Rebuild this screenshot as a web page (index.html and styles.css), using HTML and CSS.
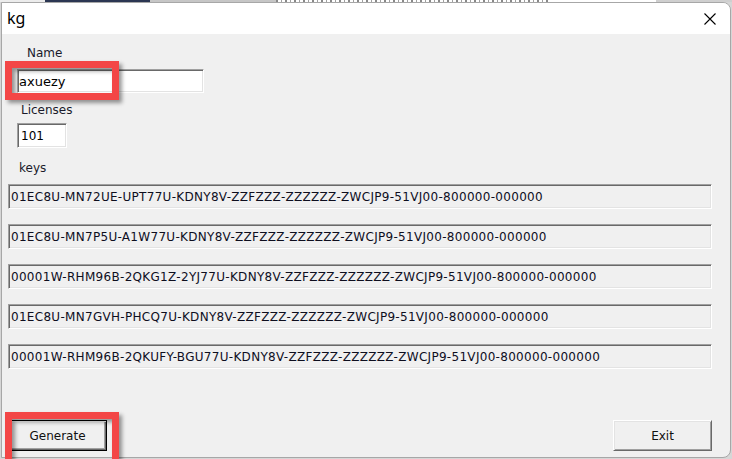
FILE: index.html
```html
<!DOCTYPE html>
<html lang="en">
<head>
    <meta charset="UTF-8">
    <meta name="viewport" content="width=device-width, initial-scale=1.0">
    <title>kg</title>
    <link rel="stylesheet" href="styles.css">
</head>
<body>
    <div class="desktop">
        <span class="desk-light"></span>
        <span class="desk-dark"></span>
        <span class="desk-gray"></span>
        <span class="desk-ink"></span>
        <span class="desk-fill"></span>
        <span class="desk-gray2"></span>
    </div>

    <div class="window">
        <div class="titlebar">
            <span class="title">kg</span>
            <svg class="close" width="12" height="12" viewBox="0 0 12 12">
                <path d="M0.5 0.5 L11.5 11.5 M11.5 0.5 L0.5 11.5" stroke="#000" stroke-width="1.1" fill="none"/>
            </svg>
        </div>

        <div class="client">
            <div class="label label-name">Name</div>
            <input class="edit edit-name" type="text" value="axuezy">

            <div class="label label-lic">Licenses</div>
            <input class="edit edit-lic" type="text" value="101">

            <div class="label label-keys">keys</div>
            <div class="keys">
                <div class="key">01EC8U-MN72UE-UPT77U-KDNY8V-ZZFZZZ-ZZZZZZ-ZWCJP9-51VJ00-800000-000000</div>
                <div class="key">01EC8U-MN7P5U-A1W77U-KDNY8V-ZZFZZZ-ZZZZZZ-ZWCJP9-51VJ00-800000-000000</div>
                <div class="key">00001W-RHM96B-2QKG1Z-2YJ77U-KDNY8V-ZZFZZZ-ZZZZZZ-ZWCJP9-51VJ00-800000-000000</div>
                <div class="key">01EC8U-MN7GVH-PHCQ7U-KDNY8V-ZZFZZZ-ZZZZZZ-ZWCJP9-51VJ00-800000-000000</div>
                <div class="key">00001W-RHM96B-2QKUFY-BGU77U-KDNY8V-ZZFZZZ-ZZZZZZ-ZWCJP9-51VJ00-800000-000000</div>
            </div>

            <div class="buttons">
                <button class="btn btn-default">Generate</button>
                <button class="btn">Exit</button>
            </div>
        </div>
    </div>

    <div class="mark mark-name"></div>
    <div class="mark mark-generate"></div>
</body>
</html>
```

FILE: styles.css
```css
body {
    margin: 0;
    width: 732px;
    height: 459px;
    overflow: hidden;
    position: relative;
    background-color: #d6d6d6;
    font-family: "DejaVu Sans", Tahoma, sans-serif;
    font-size: 12px;
    color: #111;
}

/* bits of the desktop peeking above the dialog */
.desktop {
    display: flex;
    height: 2px;
    overflow: hidden;
    background-color: #fff;
}

.desk-light {
    width: 45px;
    background-color: #ececec;
}

.desk-dark {
    width: 105px;
    background-color: #2b3652;
}

.desk-gray {
    width: 126px;
    background-color: #c6c6c6;
}

.desk-ink {
    width: 274px;
    background: repeating-linear-gradient(90deg, #555 0 2px, #fff 2px 5px, #777 5px 6px, #fff 6px 9px);
    opacity: 0.7;
}

.desk-fill {
    flex: 1;
}

.desk-gray2 {
    width: 76px;
    background-color: #cfcfcf;
}

.window {
    width: 728px;
    height: 454px;
    margin-left: 1px;
    border: 1px solid #a7a7a7;
    border-radius: 0 8px 8px 0;
    background-color: #f0f0f0;
    overflow: hidden;
}

.titlebar {
    display: flex;
    align-items: center;
    justify-content: space-between;
    height: 31px;
    padding: 0 14px 0 5px;
    background-color: #fff;
}

.title {
    font-family: "Noto Sans", "Open Sans", sans-serif;
    font-size: 16px;
    line-height: 31px;
    color: #000;
}

.close {
    display: block;
}

.client {
    height: 423px;
}

.label {
    line-height: 14px;
    color: #1a1a2a;
}

.label-name {
    margin: 12px 0 0 25px;
}

.label-lic {
    margin: 10px 0 0 19px;
}

.label-keys {
    margin: 13px 0 0 17px;
}

.edit {
    display: block;
    box-sizing: border-box;
    margin: 0 0 0 15px;
    padding: 0 0 0 1px;
    font-family: "DejaVu Sans", Tahoma, sans-serif;
    color: #000;
    background-color: #fff;
    border-style: solid;
    border-width: 1px;
    border-color: #a0a0a0 #fff #fff #a0a0a0;
    box-shadow: inset 1px 1px 0 #696969, inset -1px -1px 0 #e3e3e3;
    outline: none;
}

.edit-name {
    width: 187px;
    height: 24px;
    margin-top: 9px;
    font-size: 13px;
}

.edit-lic {
    width: 50px;
    height: 25px;
    margin-top: 6px;
    padding-left: 3px;
    font-size: 12px;
}

.keys {
    display: flex;
    flex-direction: column;
    gap: 15px;
    margin: 9px 0 0 6px;
    width: 704px;
}

.key {
    box-sizing: border-box;
    height: 25px;
    line-height: 25px;
    padding-left: 2px;
    white-space: nowrap;
    letter-spacing: 0.3px;
    color: #0e0e1e;
    border-style: solid;
    border-width: 1px;
    border-color: #a0a0a0 #fff #fff #a0a0a0;
    box-shadow: inset 1px 1px 0 #696969, inset -1px -1px 0 #e3e3e3;
}

.buttons {
    display: flex;
    justify-content: space-between;
    margin: 51px 0 0 6px;
    width: 704px;
}

.btn {
    box-sizing: border-box;
    width: 99px;
    height: 31px;
    padding: 0;
    font-family: "DejaVu Sans", Tahoma, sans-serif;
    font-size: 12px;
    color: #111;
    background-color: #f0f0f0;
    border-style: solid;
    border-width: 1px;
    border-color: #fff #696969 #696969 #fff;
    box-shadow: inset 1px 1px 0 #e3e3e3, inset -1px -1px 0 #a0a0a0;
}

.btn-default {
    border-color: #000;
    box-shadow: inset 1px 1px 0 #fff, inset -1px -1px 0 #696969, inset -2px -2px 0 #a0a0a0;
}

/* red highlight rectangles drawn over the screenshot */
.mark {
    position: absolute;
    left: 5px;
    width: 100px;
    border: 7px solid #f34646;
    box-shadow: 3px 3px 4px rgba(0, 0, 0, 0.4), inset 3px 3px 4px rgba(0, 0, 0, 0.4);
}

.mark-name {
    top: 61px;
    height: 25px;
}

.mark-generate {
    top: 412px;
    height: 50px;
}
```
